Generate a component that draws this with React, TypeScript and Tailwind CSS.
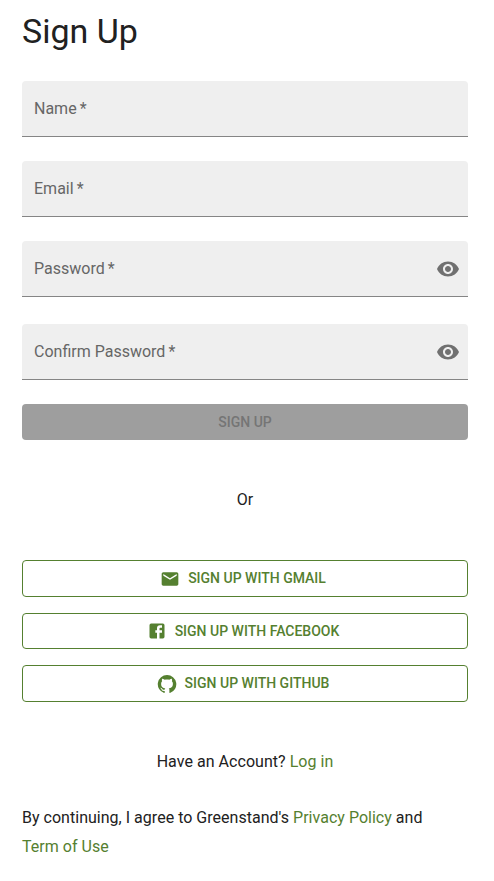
import React from "react";

function Eye() {
  return (
    <svg viewBox="0 0 24 24" className="h-6 w-6 shrink-0 fill-[#707070]">
      <path d="M12 4.5C7 4.5 2.73 7.61 1 12c1.73 4.39 6 7.5 11 7.5s9.27-3.11 11-7.5c-1.73-4.39-6-7.5-11-7.5zM12 17c-2.76 0-5-2.24-5-5s2.24-5 5-5 5 2.24 5 5-2.24 5-5 5zm0-8c-1.66 0-3 1.34-3 3s1.34 3 3 3 3-1.34 3-3-1.34-3-3-3z" />
    </svg>
  );
}

function Field({ label, secret, className = "" }: { label: string; secret?: boolean; className?: string }) {
  return (
    <div className={`flex h-14 items-center justify-between rounded-t border-b border-[#858585] bg-[#efefef] pl-3 pr-2 text-[#666] ${className}`}>
      <span className="text-base leading-6">
        {label}
        <span className="ml-[-0.8px]"> *</span>
      </span>
      {secret && <Eye />}
    </div>
  );
}

function SocialButton({ label, icon, className, textClass = "" }: { label: string; icon: string; className: string; textClass?: string }) {
  return (
    <button className={`flex w-full items-center justify-center rounded border border-[#558030] text-sm font-medium text-[#558030] ${className}`}>
      <svg viewBox="0 0 24 24" className="-ml-1 mr-2 h-5 w-5 fill-current">
        <path d={icon} />
      </svg>
      <span className={textClass}>{label}</span>
    </button>
  );
}

const mail = "M20 4H4c-1.1 0-1.99.9-1.99 2L2 18c0 1.1.9 2 2 2h16c1.1 0 2-.9 2-2V6c0-1.1-.9-2-2-2zm0 4l-8 5-8-5V6l8 5 8-5v2z";
const facebook = "M5 3h14a2 2 0 0 1 2 2v14a2 2 0 0 1-2 2h-4v-7h3v-3h-3V9a1 1 0 0 1 1-1h2V5h-2.5A3.5 3.5 0 0 0 12 8.5V11h-2v3h2v7H5a2 2 0 0 1-2-2V5a2 2 0 0 1 2-2z";
const github = "M12 1.27a11 11 0 00-3.48 21.46c.55.09.73-.28.73-.55v-1.84c-3.03.64-3.67-1.46-3.67-1.46-.55-1.29-1.28-1.65-1.28-1.65-.92-.65.1-.65.1-.65 1.1 0 1.73 1.1 1.73 1.1.92 1.65 2.57 1.2 3.21.92a2 2 0 01.64-1.47c-2.47-.27-5.04-1.19-5.04-5.5 0-1.1.46-2.1 1.2-2.84a3.76 3.76 0 010-2.93s.91-.28 3.11 1.1c1.8-.49 3.7-.49 5.5 0 2.1-1.38 3.02-1.1 3.02-1.1a3.76 3.76 0 01.1 2.93c.83.74 1.2 1.74 1.2 2.94 0 4.21-2.57 5.13-5.04 5.4.45.37.82.92.82 2.02v3.03c0 .27.1.64.73.55A11 11 0 0012 1.27";

export default function App() {
  return (
    <main className="flex h-[881px] w-full flex-col bg-white pl-[22px] pr-[26px] pt-2.5 font-['Roboto',sans-serif] text-[#212121]">
      <h1 className="h-[42px] text-[34px] leading-[42px]">Sign Up</h1>
      <Field label="Name" className="mt-[29px]" />
      <Field label="Email" className="mt-6" />
      <Field label="Password" secret className="mt-6" />
      <Field label="Confirm Password" secret className="mt-[27px]" />
      <button className="mt-6 h-9 shrink-0 rounded bg-[#9e9e9e] text-sm font-medium text-[#757575]">SIGN UP</button>
      <p className="mt-12 text-center text-base leading-6">Or</p>
      <div className="mt-12 flex flex-col">
        <SocialButton label="SIGN UP WITH GMAIL" icon={mail} className="h-[37px]" textClass="pb-0.5" />
        <SocialButton label="SIGN UP WITH FACEBOOK" icon={facebook} className="mt-4 h-9" />
        <SocialButton label="SIGN UP WITH GITHUB" icon={github} className="mt-4 h-[37px]" textClass="pb-0.5" />
      </div>
      <p className="mt-12 text-center text-base leading-6 tracking-[0.04px]">
        Have an Account? <a className="text-[#558030]">Log in</a>
      </p>
      <p className="mt-[29px] text-base leading-[29px] tracking-[0.02px]">
        By continuing, I agree to Greenstand's <a className="text-[#558030]">Privacy Policy</a> and
        <br />
        <a className="text-[#558030]">Term of Use</a>
      </p>
    </main>
  );
}
